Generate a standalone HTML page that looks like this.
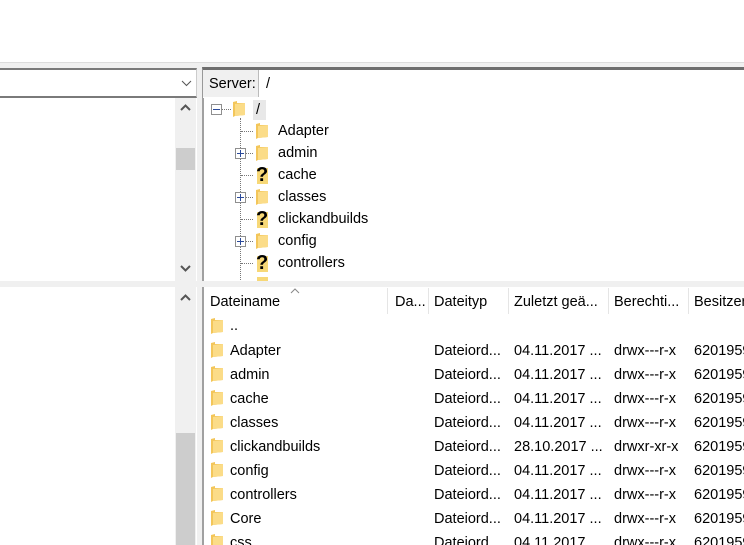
<!DOCTYPE html>
<html style="width:744px;height:545px;overflow:hidden"><head><meta charset="utf-8"><style>
*{margin:0;padding:0;box-sizing:border-box}
body{width:744px;height:545px;overflow:hidden;background:#f0f0f0;font-family:"Liberation Sans",sans-serif;font-size:14.5px;color:#000;position:relative}
.a{position:absolute}
.t{position:absolute;white-space:nowrap;line-height:16px}
.sb{position:absolute;background:#f0f0f0}
.thumb{position:absolute;background:#cdcdcd}
.f{position:absolute;width:12px;height:16px}
.q{position:absolute;font-weight:bold;font-size:20px;line-height:18px;width:12px;text-align:center}
.pm{position:absolute;width:11px;height:11px;border:1px solid #8f8f8f;background:#fff}
.pm:before{content:"";position:absolute;left:1px;top:4px;width:7px;height:1px;background:#2b4a9a}
.pl:after{content:"";position:absolute;left:4px;top:1px;width:1px;height:7px;background:#2b4a9a}
.dh{position:absolute;height:1px;border-top:1px dotted #777}
.dv{position:absolute;width:1px;border-left:1px dotted #777}
.hs{position:absolute;top:288px;width:1px;height:26px;background:#e5e5e5}
</style></head><body>
<svg width="0" height="0" style="position:absolute"><defs>
<symbol id="fo" viewBox="0 0 12 16"><path d="M0 1 L4 0 L4 2 L12 2 L12 14 L2 15 L0 16Z" fill="#f3c65a"/><path d="M2 3 L12 2 L12 14 L2 15Z" fill="#fbdc88"/></symbol>
</defs></svg>
<div class="a" style="left:0;top:0;width:744px;height:63px;background:#fff;border-bottom:1px solid #dcdcdc"></div>
<div class="a" style="left:0;top:68px;width:197px;height:30px;background:#fff;border-top:2px solid #7a7a7a;border-bottom:2px solid #7a7a7a;border-right:1px solid #ccc"></div>
<svg class="a" style="left:181px;top:80px" width="11" height="7"><path d="M1 1 L5.5 5.5 L10 1" stroke="#555" fill="none"/></svg>
<div class="a" style="left:202px;top:67px;width:542px;height:31px;background:#fff;border-top:3px solid #6e6e6e;border-left:1px solid #999"></div>
<div class="a" style="left:203px;top:70px;width:56px;height:27px;background:#f0f0f0;border-right:1px solid #bbb"></div>
<div class="t" style="left:209px;top:76px">Server:</div>
<div class="t" style="left:266px;top:76px">/</div>
<div class="a" style="left:0;top:98px;width:197px;height:183px;background:#fff"></div>
<div class="sb" style="left:175px;top:98px;width:21px;height:183px"></div>
<div class="thumb" style="left:176px;top:148px;width:19px;height:22px"></div>
<svg class="a" style="left:180px;top:104px" width="11" height="8"><path d="M1 6 L5.5 1.5 L10 6" stroke="#555" stroke-width="2" fill="none"/></svg>
<svg class="a" style="left:180px;top:264px" width="11" height="8"><path d="M1 2 L5.5 6.5 L10 2" stroke="#555" stroke-width="2" fill="none"/></svg>
<div class="a" style="left:202px;top:98px;width:542px;height:183px;background:#fff;border-left:2px solid #a0a0a0"></div>
<div class="pm" style="left:211px;top:104px"></div>
<div class="dh" style="left:222px;top:109px;width:9px"></div>
<svg class="f" style="left:233px;top:101px"><use href="#fo"/></svg>
<div class="a" style="left:253px;top:100px;width:13px;height:20px;background:#e8e8e8"></div>
<div class="t" style="left:256px;top:102px">/</div>
<div class="dv" style="left:240px;top:118px;height:162px"></div>
<div class="dh" style="left:241px;top:131px;width:12px"></div>
<svg class="f" style="left:256px;top:123px"><use href="#fo"/></svg><div class="t" style="left:278px;top:123px">Adapter</div>
<div class="pm pl" style="left:235px;top:148px"></div><div class="dh" style="left:246px;top:153px;width:7px"></div>
<svg class="f" style="left:256px;top:145px"><use href="#fo"/></svg><div class="t" style="left:278px;top:145px">admin</div>
<div class="dh" style="left:241px;top:175px;width:12px"></div>
<div class="a" style="left:257px;top:168px;width:11px;height:16px;background:#f7d877"></div><div class="q" style="left:256px;top:166px">?</div><div class="t" style="left:278px;top:167px">cache</div>
<div class="pm pl" style="left:235px;top:192px"></div><div class="dh" style="left:246px;top:197px;width:7px"></div>
<svg class="f" style="left:256px;top:189px"><use href="#fo"/></svg><div class="t" style="left:278px;top:189px">classes</div>
<div class="dh" style="left:241px;top:219px;width:12px"></div>
<div class="a" style="left:257px;top:212px;width:11px;height:16px;background:#f7d877"></div><div class="q" style="left:256px;top:210px">?</div><div class="t" style="left:278px;top:211px">clickandbuilds</div>
<div class="pm pl" style="left:235px;top:236px"></div><div class="dh" style="left:246px;top:241px;width:7px"></div>
<svg class="f" style="left:256px;top:233px"><use href="#fo"/></svg><div class="t" style="left:278px;top:233px">config</div>
<div class="dh" style="left:241px;top:263px;width:12px"></div>
<div class="a" style="left:257px;top:256px;width:11px;height:16px;background:#f7d877"></div><div class="q" style="left:256px;top:254px">?</div><div class="t" style="left:278px;top:255px">controllers</div>
<div class="a" style="left:257px;top:277px;width:11px;height:4px;background:#f7d877"></div>
<div class="a" style="left:0;top:287px;width:197px;height:258px;background:#fff"></div>
<div class="sb" style="left:175px;top:287px;width:21px;height:258px"></div>
<div class="thumb" style="left:176px;top:433px;width:19px;height:112px"></div>
<svg class="a" style="left:180px;top:294px" width="11" height="8"><path d="M1 6 L5.5 1.5 L10 6" stroke="#555" stroke-width="2" fill="none"/></svg>
<div class="a" style="left:202px;top:287px;width:542px;height:258px;background:#fff;border-left:2px solid #a0a0a0"></div>
<div class="hs" style="left:387px"></div><div class="hs" style="left:428px"></div><div class="hs" style="left:508px"></div><div class="hs" style="left:608px"></div><div class="hs" style="left:688px"></div>
<svg class="a" style="left:290px;top:288px" width="10" height="6"><path d="M1 5 L5 1 L9 5" stroke="#888" fill="none"/></svg>
<div class="t" style="left:210px;top:294px">Dateiname</div>
<div class="t" style="left:395px;top:294px">Da...</div>
<div class="t" style="left:434px;top:294px">Dateityp</div>
<div class="t" style="left:514px;top:294px">Zuletzt geä...</div>
<div class="t" style="left:614px;top:294px">Berechti...</div>
<div class="t" style="left:694px;top:294px">Besitzer</div>
<svg class="f" style="left:211px;top:318px"><use href="#fo"/></svg><div class="t" style="left:230px;top:318px">..</div>
<svg class="f" style="left:211px;top:342px"><use href="#fo"/></svg><div class="t" style="left:230px;top:343px">Adapter</div><div class="t" style="left:434px;top:343px">Dateiord...</div><div class="t" style="left:514px;top:343px">04.11.2017 ...</div><div class="t" style="left:614px;top:343px">drwx---r-x</div><div class="t" style="left:694px;top:343px">6201959</div>
<svg class="f" style="left:211px;top:366px"><use href="#fo"/></svg><div class="t" style="left:230px;top:367px">admin</div><div class="t" style="left:434px;top:367px">Dateiord...</div><div class="t" style="left:514px;top:367px">04.11.2017 ...</div><div class="t" style="left:614px;top:367px">drwx---r-x</div><div class="t" style="left:694px;top:367px">6201959</div>
<svg class="f" style="left:211px;top:390px"><use href="#fo"/></svg><div class="t" style="left:230px;top:391px">cache</div><div class="t" style="left:434px;top:391px">Dateiord...</div><div class="t" style="left:514px;top:391px">04.11.2017 ...</div><div class="t" style="left:614px;top:391px">drwx---r-x</div><div class="t" style="left:694px;top:391px">6201959</div>
<svg class="f" style="left:211px;top:414px"><use href="#fo"/></svg><div class="t" style="left:230px;top:415px">classes</div><div class="t" style="left:434px;top:415px">Dateiord...</div><div class="t" style="left:514px;top:415px">04.11.2017 ...</div><div class="t" style="left:614px;top:415px">drwx---r-x</div><div class="t" style="left:694px;top:415px">6201959</div>
<svg class="f" style="left:211px;top:438px"><use href="#fo"/></svg><div class="t" style="left:230px;top:439px">clickandbuilds</div><div class="t" style="left:434px;top:439px">Dateiord...</div><div class="t" style="left:514px;top:439px">28.10.2017 ...</div><div class="t" style="left:614px;top:439px">drwxr-xr-x</div><div class="t" style="left:694px;top:439px">6201959</div>
<svg class="f" style="left:211px;top:462px"><use href="#fo"/></svg><div class="t" style="left:230px;top:463px">config</div><div class="t" style="left:434px;top:463px">Dateiord...</div><div class="t" style="left:514px;top:463px">04.11.2017 ...</div><div class="t" style="left:614px;top:463px">drwx---r-x</div><div class="t" style="left:694px;top:463px">6201959</div>
<svg class="f" style="left:211px;top:486px"><use href="#fo"/></svg><div class="t" style="left:230px;top:487px">controllers</div><div class="t" style="left:434px;top:487px">Dateiord...</div><div class="t" style="left:514px;top:487px">04.11.2017 ...</div><div class="t" style="left:614px;top:487px">drwx---r-x</div><div class="t" style="left:694px;top:487px">6201959</div>
<svg class="f" style="left:211px;top:510px"><use href="#fo"/></svg><div class="t" style="left:230px;top:511px">Core</div><div class="t" style="left:434px;top:511px">Dateiord...</div><div class="t" style="left:514px;top:511px">04.11.2017 ...</div><div class="t" style="left:614px;top:511px">drwx---r-x</div><div class="t" style="left:694px;top:511px">6201959</div>
<svg class="f" style="left:211px;top:534px"><use href="#fo"/></svg><div class="t" style="left:230px;top:535px">css</div><div class="t" style="left:434px;top:535px">Dateiord...</div><div class="t" style="left:514px;top:535px">04.11.2017 ...</div><div class="t" style="left:614px;top:535px">drwx---r-x</div><div class="t" style="left:694px;top:535px">6201959</div>
</body></html>
